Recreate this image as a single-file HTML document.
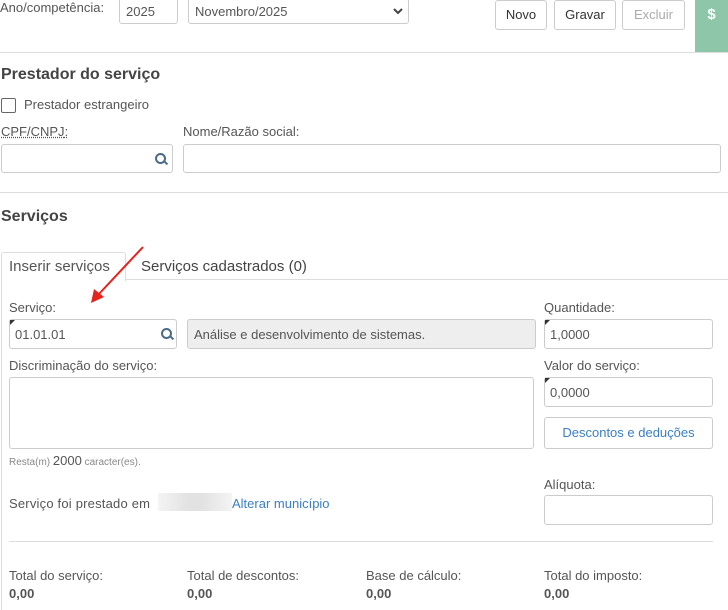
<!DOCTYPE html><html><head><meta charset="utf-8"><style>
body{margin:0;width:728px;height:600px;overflow:hidden;background:#fff;font-family:"Liberation Sans",sans-serif;font-size:13px;color:#555;position:relative}
.a{position:absolute;white-space:nowrap}
.in{position:absolute;border:1px solid #ccc;border-radius:3px;box-sizing:border-box;background:#fff}
.btn{position:absolute;border:1px solid #ccc;border-radius:3px;box-sizing:border-box;background:#fff;text-align:center;line-height:27px;color:#333}
.hr{position:absolute;height:1px;background:#ddd}
.mk{position:absolute;left:0;top:0;width:0;height:0;border-top:5px solid #333;border-right:5px solid transparent}
.lens{position:absolute;width:7px;height:7px;border:2px solid #4a6a8a;border-radius:50%}
.lens:after{content:"";position:absolute;left:7px;top:7px;width:4px;height:2px;background:#4a6a8a;transform:rotate(45deg)}
</style></head><body>
<div class="a" style="left:0;top:0">Ano/competência:</div>
<div class="in" style="left:119px;top:-2px;width:59px;height:26px"><span class="a" style="left:6px;top:5px">2025</span></div>
<div class="in" style="left:188px;top:-2px;width:221px;height:26px"><span class="a" style="left:6px;top:5px">Novembro/2025</span><svg class="a" style="left:204px;top:8px" width="10" height="8"><polyline points="1,2 5,6 9,2" fill="none" stroke="#444" stroke-width="2"/></svg></div>
<div class="btn" style="left:495px;top:0;width:52px;height:30px">Novo</div>
<div class="btn" style="left:554px;top:0;width:62px;height:30px">Gravar</div>
<div class="btn" style="left:622px;top:0;width:63px;height:30px;color:#aaa">Excluir</div>
<div class="a" style="left:695px;top:0;width:33px;height:52px;background:#8dc6a8;color:#fff;font-weight:bold;font-size:15px;text-align:center;line-height:30px">$</div>
<div class="hr" style="left:0;top:52px;width:728px"></div>
<div class="a" style="left:1px;top:66px;font-size:16px;font-weight:bold;color:#444">Prestador do serviço</div>
<div class="a" style="left:1px;top:98px;width:13px;height:13px;border:1px solid #666;border-radius:2px"></div>
<div class="a" style="left:24px;top:97px">Prestador estrangeiro</div>
<div class="a" style="left:1px;top:124px;text-decoration:underline dotted">CPF/CNPJ<span style="text-decoration:none">:</span></div>
<div class="a" style="left:183px;top:124px">Nome/Razão social:</div>
<div class="in" style="left:1px;top:144px;width:172px;height:29px"><div class="lens" style="left:153px;top:8px"></div></div>
<div class="in" style="left:183px;top:144px;width:538px;height:29px"></div>
<div class="hr" style="left:0;top:192px;width:728px"></div>
<div class="a" style="left:1px;top:208px;font-size:16px;font-weight:bold;color:#444">Serviços</div>
<div class="a" style="left:1px;top:279px;width:726px;height:330px;border-left:1px solid #ddd;border-top:1px solid #ddd"></div>
<div class="a" style="left:1px;top:252px;width:123px;height:28px;border:1px solid #ddd;border-bottom:none;border-radius:3px 3px 0 0;background:#fff"></div>
<div class="a" style="left:9px;top:258px;font-size:15px">Inserir serviços</div>
<div class="a" style="left:141px;top:258px;font-size:15px;color:#444">Serviços cadastrados (0)</div>
<div class="a" style="left:9px;top:300px">Serviço:</div>
<div class="a" style="left:544px;top:300px">Quantidade:</div>
<div class="in" style="left:9px;top:319px;width:168px;height:30px"><div class="mk"></div><span class="a" style="left:5px;top:7px">01.01.01</span><div class="lens" style="left:151px;top:8px"></div></div>
<div class="in" style="left:187px;top:319px;width:349px;height:30px;background:#eee"><span class="a" style="left:6px;top:7px">Análise e desenvolvimento de sistemas.</span></div>
<div class="in" style="left:544px;top:319px;width:169px;height:30px"><div class="mk"></div><span class="a" style="left:5px;top:7px">1,0000</span></div>
<div class="a" style="left:9px;top:358px">Discriminação do serviço:</div>
<div class="a" style="left:544px;top:358px">Valor do serviço:</div>
<div class="in" style="left:9px;top:377px;width:525px;height:72px"></div>
<div class="in" style="left:544px;top:377px;width:169px;height:30px"><div class="mk"></div><span class="a" style="left:5px;top:7px">0,0000</span></div>
<div class="btn" style="left:544px;top:417px;width:169px;height:32px;line-height:30px;color:#3a7fc4">Descontos e deduções</div>
<div class="a" style="left:9px;top:453px;font-size:10px;color:#888">Resta(m) <span style="font-size:13px;color:#555">2000</span> caracter(es).</div>
<div class="a" style="left:544px;top:477px">Alíquota:</div>
<div class="in" style="left:544px;top:495px;width:169px;height:30px"></div>
<div class="a" style="left:9px;top:496px;letter-spacing:0.2px">Serviço foi prestado em</div>
<div class="a" style="left:158px;top:493px;width:74px;height:18px;background:linear-gradient(90deg,#f4f4f4,#e2e2e2 40%,#e2e2e2 60%,#f4f4f4)"></div>
<div class="a" style="left:232px;top:496px;color:#3a7fc4">Alterar município</div>
<div class="hr" style="left:9px;top:541px;width:704px"></div>
<div class="a" style="left:9px;top:568px">Total do serviço:</div>
<div class="a" style="left:187px;top:568px">Total de descontos:</div>
<div class="a" style="left:366px;top:568px">Base de cálculo:</div>
<div class="a" style="left:544px;top:568px">Total do imposto:</div>
<div class="a" style="left:9px;top:586px;font-weight:bold">0,00</div>
<div class="a" style="left:187px;top:586px;font-weight:bold">0,00</div>
<div class="a" style="left:366px;top:586px;font-weight:bold">0,00</div>
<div class="a" style="left:544px;top:586px;font-weight:bold">0,00</div>
<svg class="a" style="left:0;top:0" width="728" height="600"><line x1="143" y1="247" x2="98" y2="295" stroke="#e5231b" stroke-width="2"/><polygon points="91,303 94,289 104,297" fill="#e5231b"/></svg>
</body></html>
